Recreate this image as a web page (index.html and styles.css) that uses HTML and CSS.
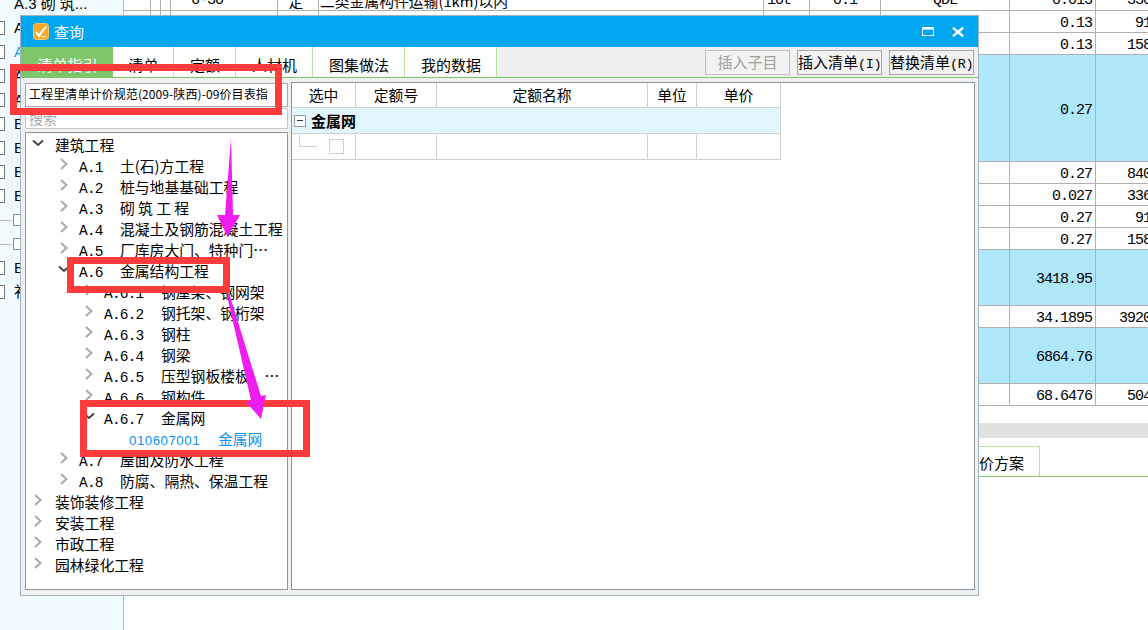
FILE: index.html
```html
<!DOCTYPE html>
<html lang="zh">
<head>
<meta charset="utf-8">
<title>查询</title>
<link rel="stylesheet" href="styles.css">
</head>
<body>
<div class="app">
  <aside class="side">
    <div class="side-row"><span class="side-text">A.3 砌 筑...</span></div>
    <div class="side-row"><i class="doc"></i><span class="side-text">A</span></div>
    <div class="side-row"><i class="doc"></i><span class="side-text blue">A</span></div>
    <div class="side-row"><i class="doc"></i><span class="side-text">A</span></div>
    <div class="side-row"><i class="doc"></i><span class="side-text">A</span></div>
    <div class="side-row"><i class="doc"></i><span class="side-text">B</span></div>
    <div class="side-row"><i class="doc"></i><span class="side-text">B</span></div>
    <div class="side-row"><i class="doc"></i><span class="side-text">B</span></div>
    <div class="side-row"><i class="doc"></i><span class="side-text">B</span></div>
    <div class="side-row"><i class="dash"></i><i class="sq"></i></div>
    <div class="side-row"><i class="dash"></i><i class="sq"></i></div>
    <div class="side-row"><i class="doc"></i><span class="side-text">B</span></div>
    <div class="side-row"><i class="doc"></i><span class="side-text">补</span></div>
  </aside>
  <main class="main">
    <table class="sheet">
      <colgroup>
        <col class="c27"><col class="c10"><col class="c10"><col class="c107"><col class="c41"><col class="c445"><col class="c46"><col class="c71"><col class="c129"><col class="c86"><col class="c59">
      </colgroup>
      <tr class="r22 first"><td></td><td></td><td></td><td class="ind">6-30</td><td class="ctr cjk">定</td><td class="cjk tight">二类金属构件运输(1km)以内</td><td>10t</td><td class="ctr">0.1</td><td class="ctr">QDL</td><td class="rt">0.013</td><td class="rt">330</td></tr>
      <tr class="r22"><td></td><td></td><td></td><td></td><td></td><td></td><td></td><td></td><td></td><td class="rt">0.13</td><td class="rt">91</td></tr>
      <tr class="r22"><td></td><td></td><td></td><td></td><td></td><td></td><td></td><td></td><td></td><td class="rt">0.13</td><td class="rt">158</td></tr>
      <tr class="r107 hi"><td></td><td></td><td></td><td></td><td></td><td></td><td></td><td></td><td></td><td class="rt">0.27</td><td></td></tr>
      <tr class="r22"><td></td><td></td><td></td><td></td><td></td><td></td><td></td><td></td><td></td><td class="rt">0.27</td><td class="rt">840</td></tr>
      <tr class="r22"><td></td><td></td><td></td><td></td><td></td><td></td><td></td><td></td><td></td><td class="rt">0.027</td><td class="rt">336</td></tr>
      <tr class="r22"><td></td><td></td><td></td><td></td><td></td><td></td><td></td><td></td><td></td><td class="rt">0.27</td><td class="rt">91</td></tr>
      <tr class="r22"><td></td><td></td><td></td><td></td><td></td><td></td><td></td><td></td><td></td><td class="rt">0.27</td><td class="rt">158</td></tr>
      <tr class="r56 hi"><td></td><td></td><td></td><td></td><td></td><td></td><td></td><td></td><td></td><td class="rt">3418.95</td><td></td></tr>
      <tr class="r22"><td></td><td></td><td></td><td></td><td></td><td></td><td></td><td></td><td></td><td class="rt">34.1895</td><td class="rt">3920</td></tr>
      <tr class="r56 hi"><td></td><td></td><td></td><td></td><td></td><td></td><td></td><td></td><td></td><td class="rt">6864.76</td><td></td></tr>
      <tr class="r22"><td></td><td></td><td></td><td></td><td></td><td></td><td></td><td></td><td></td><td class="rt">68.6476</td><td class="rt">504</td></tr>
    </table>
    <div class="band"></div>
    <div class="lower-tabs"><span class="lower-tab">价方案</span></div>
  </main>
</div>

<section class="win">
  <header class="win-title">
    <svg class="logo" width="16" height="17" viewBox="0 0 16 17">
      <rect x="0.5" y="0.5" width="15" height="16" rx="3" fill="#f7a62a" stroke="#fbc766"/>
      <path d="M3 9 C4 10 5 11.500 6 13 C8 9.500 10.500 6 13.500 3.500" fill="none" stroke="#fff" stroke-width="2"/>
      <path d="M8 13.500 H13" stroke="#fff" stroke-width="1.200"/>
    </svg>
    <span class="win-name">查询</span>
    <span class="win-controls">
      <svg width="12" height="9" viewBox="0 0 12 9"><rect x="0.500" y="0" width="11" height="8.500" fill="none" stroke="#fff"/><rect x="0.500" y="0" width="11" height="2.500" fill="#fff"/></svg>
      <svg width="12" height="10" viewBox="0 0 12 10"><path d="M1 0.800 L11 9.200 M11 0.800 L1 9.200" stroke="#fff" stroke-width="2.400"/></svg>
    </span>
  </header>
  <nav class="tabbar">
    <span class="tab active">清单指引</span>
    <span class="tab t61">清单</span>
    <span class="tab t62">定额</span>
    <span class="tab t77">人材机</span>
    <span class="tab t92">图集做法</span>
    <span class="tab t92">我的数据</span>
    <span class="btns">
      <span class="btn off">插入子目</span>
      <span class="btn">插入清单<b class="mono">(I)</b></span>
      <span class="btn">替换清单<b class="mono">(R)</b></span>
    </span>
  </nav>
  <div class="win-body">
    <div class="left">
      <div class="combo">工程里清单计价规范(2009-陕西)-09价目表指</div>
      <div class="search">搜索</div>
      <div class="tree">
        <div class="node l1"><svg class="ic" viewBox="0 0 12 12"><path class="dark" d="M1 3.500 L6 8 L11 3.500"/></svg><span class="nm">建筑工程</span></div>
        <div class="node l2"><svg class="ic" viewBox="0 0 12 12"><path d="M3 1 L8.500 6 L3 11"/></svg><span class="code">A.1</span><span class="nm">土(石)方工程</span></div>
        <div class="node l2"><svg class="ic" viewBox="0 0 12 12"><path d="M3 1 L8.500 6 L3 11"/></svg><span class="code">A.2</span><span class="nm">桩与地基基础工程</span></div>
        <div class="node l2"><svg class="ic" viewBox="0 0 12 12"><path d="M3 1 L8.500 6 L3 11"/></svg><span class="code">A.3</span><span class="nm">砌 筑 工 程</span></div>
        <div class="node l2"><svg class="ic" viewBox="0 0 12 12"><path d="M3 1 L8.500 6 L3 11"/></svg><span class="code">A.4</span><span class="nm">混凝土及钢筋混凝土工程</span></div>
        <div class="node l2"><svg class="ic" viewBox="0 0 12 12"><path d="M3 1 L8.500 6 L3 11"/></svg><span class="code">A.5</span><span class="nm">厂库房大门、特种门…</span></div>
        <div class="node l2"><svg class="ic" viewBox="0 0 12 12"><path class="dark" d="M1 3.500 L6 8 L11 3.500"/></svg><span class="code">A.6</span><span class="nm">金属结构工程</span></div>
        <div class="node l3"><svg class="ic" viewBox="0 0 12 12"><path d="M3 1 L8.500 6 L3 11"/></svg><span class="code">A.6.1</span><span class="nm">钢屋架、钢网架</span></div>
        <div class="node l3"><svg class="ic" viewBox="0 0 12 12"><path d="M3 1 L8.500 6 L3 11"/></svg><span class="code">A.6.2</span><span class="nm">钢托架、钢桁架</span></div>
        <div class="node l3"><svg class="ic" viewBox="0 0 12 12"><path d="M3 1 L8.500 6 L3 11"/></svg><span class="code">A.6.3</span><span class="nm">钢柱</span></div>
        <div class="node l3"><svg class="ic" viewBox="0 0 12 12"><path d="M3 1 L8.500 6 L3 11"/></svg><span class="code">A.6.4</span><span class="nm">钢梁</span></div>
        <div class="node l3"><svg class="ic" viewBox="0 0 12 12"><path d="M3 1 L8.500 6 L3 11"/></svg><span class="code">A.6.5</span><span class="nm">压型钢板楼板、…</span></div>
        <div class="node l3"><svg class="ic" viewBox="0 0 12 12"><path d="M3 1 L8.500 6 L3 11"/></svg><span class="code">A.6.6</span><span class="nm">钢构件</span></div>
        <div class="node l3"><svg class="ic" viewBox="0 0 12 12"><path class="dark" d="M1 3.500 L6 8 L11 3.500"/></svg><span class="code">A.6.7</span><span class="nm">金属网</span></div>
        <div class="node leaf"><span class="code">010607001</span><span class="nm">金属网</span></div>
        <div class="node l2"><svg class="ic" viewBox="0 0 12 12"><path d="M3 1 L8.500 6 L3 11"/></svg><span class="code">A.7</span><span class="nm">屋面及防水工程</span></div>
        <div class="node l2"><svg class="ic" viewBox="0 0 12 12"><path d="M3 1 L8.500 6 L3 11"/></svg><span class="code">A.8</span><span class="nm">防腐、隔热、保温工程</span></div>
        <div class="node l1"><svg class="ic" viewBox="0 0 12 12"><path d="M3 1 L8.500 6 L3 11"/></svg><span class="nm">装饰装修工程</span></div>
        <div class="node l1"><svg class="ic" viewBox="0 0 12 12"><path d="M3 1 L8.500 6 L3 11"/></svg><span class="nm">安装工程</span></div>
        <div class="node l1"><svg class="ic" viewBox="0 0 12 12"><path d="M3 1 L8.500 6 L3 11"/></svg><span class="nm">市政工程</span></div>
        <div class="node l1"><svg class="ic" viewBox="0 0 12 12"><path d="M3 1 L8.500 6 L3 11"/></svg><span class="nm">园林绿化工程</span></div>
      </div>
    </div>
    <div class="right">
      <div class="grid">
        <div class="hd">选中</div><div class="hd">定额号</div><div class="hd">定额名称</div><div class="hd">单位</div><div class="hd">单价</div>
        <div class="group"><span class="minus"></span><span class="group-name">金属网</span></div>
        <div class="cell chk">
          <svg width="63" height="25" viewBox="0 0 63 25"><path d="M7.500 0 V12.500 H25" fill="none" stroke="#d0d0d0"/><rect x="37.500" y="5.500" width="14" height="14" fill="#fff" stroke="#d0d0d0"/></svg>
        </div>
        <div class="cell"></div><div class="cell"></div><div class="cell"></div><div class="cell"></div>
      </div>
    </div>
  </div>
</section>

<div class="mark m1"></div>
<div class="mark m2"></div>
<div class="mark m3"></div>
<svg class="arrows" width="1148" height="630" viewBox="0 0 1148 630">
  <path d="M231 138 L233 215 L240 215 L227.500 237 L217 215 L225 215 Z" fill="#f01df0"/>
  <path d="M227 296 L229 293 L261 396 L266 395 L261 419 L246 402 L251 400 Z" fill="#f01df0"/>
</svg>
</body>
</html>
```
FILE: styles.css
```css
* { box-sizing: border-box; }
html, body { margin: 0; padding: 0; }
body {
  position: relative;
  width: 1148px;
  height: 630px;
  overflow: hidden;
  background: #fff;
  color: #000;
  font-family: "Noto Sans CJK SC", "Liberation Sans", sans-serif;
}
.app { display: flex; width: 1148px; height: 630px; }

/* background sidebar */
.side {
  width: 124px;
  flex: none;
  background: #f0fbff;
  border-right: 1px solid #b4b4b4;
  margin-top: -8px;
}
.side-row {
  display: flex;
  align-items: center;
  height: 24px;
  white-space: nowrap;
  padding-left: 14px;
  position: relative;
}
.side-text { font: 15px/24px "Liberation Sans", "Noto Sans CJK SC", sans-serif; }
.side-text.blue { color: #1a9bf0; }
.doc {
  position: absolute;
  left: -6px;
  top: 5px;
  width: 11px;
  height: 14px;
  border: 1px solid #777;
  background: #fff;
}
.dash { position: absolute; left: 0; top: 12px; width: 12px; height: 1px; background: #bbb; }
.sq {
  position: absolute;
  left: 13px;
  top: 6px;
  width: 12px;
  height: 12px;
  border: 1px solid #888;
  background: #fff;
}

/* background sheet */
.main { flex: 1; min-width: 0; display: flex; flex-direction: column; }
.sheet {
  table-layout: fixed;
  width: 1031px;
  margin-top: -11px;
  border-collapse: separate;
  border-spacing: 0;
  font: 15px/14px "Liberation Mono", "Noto Sans CJK SC", monospace;
  letter-spacing: -1px;
}
.c10 { width: 10px; }
.c27 { width: 27px; }
.c41 { width: 41px; }
.c46 { width: 46px; }
.c59 { width: 59px; }
.c71 { width: 71px; }
.c86 { width: 86px; }
.c107 { width: 107px; }
.c129 { width: 129px; }
.c445 { width: 445px; }
.sheet td {
  padding: 5px 3px 0;
  border-right: 1px solid #b0b0b0;
  border-bottom: 1px solid #b0b0b0;
  white-space: nowrap;
  overflow: hidden;
}
.r22 { height: 22px; }
.r56 { height: 56px; }
.r107 { height: 107px; }
.sheet .first td { padding-top: 2px; }
.hi td { background: #afe8fb; }
.rt { text-align: right; }
.ctr { text-align: center; }
.sheet .ind { padding-left: 20px; }
.sheet .cjk { font: 14.8px/14px "Noto Sans CJK SC", sans-serif; letter-spacing: 0; }
.sheet .ctr.cjk { padding-right: 7px; }
.sheet .tight { padding-left: 1px; }
.band { height: 15px; margin-top: 17px; background: #e0e0e0; }
.lower-tabs {
  display: flex;
  justify-content: flex-end;
  height: 31px;
  margin-top: 8px;
  padding-right: 108px;
  border-bottom: 1px solid #7fc56a;
}
.lower-tab {
  width: 200px;
  padding-right: 15px;
  text-align: right;
  font-size: 15px;
  line-height: 32px;
  border-top: 1px solid #b6e39a;
  border-right: 1px solid #b6e39a;
}

/* query window */
.win {
  position: absolute;
  left: 20px;
  top: 15px;
  width: 959px;
  height: 581px;
  display: flex;
  flex-direction: column;
  background: #f0f0f0;
  border: 1px solid #9fb4c0;
}
.win-title {
  display: flex;
  align-items: center;
  height: 31px;
  flex: none;
  padding-left: 12px;
  background: #00a7f0;
}
.win-name { margin-left: 5px; color: #fff; font-size: 15px; line-height: 20px; }
.logo { display: block; }
.win-controls { display: flex; align-items: center; gap: 18px; margin-left: auto; padding-right: 14px; }
.win-controls svg { display: block; }

.tabbar {
  display: flex;
  flex: none;
  height: 31px;
  border-bottom: 1px solid #7fc56a;
}
.tab {
  background: #fff;
  border-right: 1px solid #b6e39a;
  padding-left: 1px;
  text-align: center;
  font-size: 15px;
  line-height: 35px;
  flex: none;
}
.tab.active { width: 92px; background: #7fc56a; color: #fff; border-right: 0; }
.t61 { width: 61px; }
.t62 { width: 62px; }
.t77 { width: 77px; }
.t92 { width: 92px; }
.btns { display: flex; gap: 7px; margin-left: auto; padding: 3px 4px 0 0; }
.btn {
  width: 85px;
  height: 25px;
  background: #f2f2f2;
  border: 1px solid #a8a8a8;
  text-align: center;
  font-size: 15px;
  line-height: 22px;
  white-space: nowrap;
  overflow: hidden;
}
.btn.off { color: #a0a0a0; border-color: #c0c0c0; }
.mono { font: 400 13.5px/22px "Liberation Mono", monospace; letter-spacing: -0.4px; }

.win-body {
  flex: 1;
  min-height: 0;
  display: flex;
  gap: 3px;
  padding: 4px 3px 5px 4px;
}
.left { width: 263px; flex: none; display: flex; flex-direction: column; }
.combo {
  height: 24px;
  margin-top: 1px;
  padding-left: 3px;
  background: #fff;
  border: 1px solid #a8a8a8;
  font-size: 12px;
  letter-spacing: 0.1px;
  line-height: 20px;
  white-space: nowrap;
  overflow: hidden;
}
.search {
  height: 21px;
  margin-top: 1px;
  padding-left: 3px;
  background: #fff;
  border: 1px solid #c8c8c8;
  color: #a8a8a8;
  font-size: 14px;
  line-height: 19px;
}
.tree {
  flex: 1;
  min-height: 0;
  margin-top: 3px;
  padding-top: 1px;
  background: #fff;
  border: 1px solid #8a96a0;
  overflow: hidden;
}
.node {
  display: flex;
  align-items: baseline;
  height: 21px;
  white-space: nowrap;
}
.ic { width: 12px; height: 12px; flex: none; margin-right: 9px; align-self: center; margin-top: -3px; }
.ic path { fill: none; stroke: #aaa; stroke-width: 2; }
.ic path.dark { stroke: #444; }
.l1 { padding-left: 6px; }
.l1 .ic { margin-right: 11px; }
.l2 { padding-left: 32px; }
.l3 { padding-left: 57px; }
.leaf { padding-left: 103px; color: #0a93f5; }
.nm { font-size: 14.8px; line-height: 21px; }
.code { flex: none; font: 14.5px/21px "Liberation Mono", monospace; letter-spacing: -0.8px; }
.l2 .code { width: 41px; }
.l3 .code { width: 57px; }
.leaf .code { width: 89px; font-family: "Liberation Sans", sans-serif; font-size: 13.3px; letter-spacing: 0.5px; }

.right {
  flex: 1;
  min-width: 0;
  background: #fff;
  border: 1px solid #8a96a0;
}
.grid {
  display: grid;
  grid-template-columns: 64px 81px 211px 49px 84px;
  grid-template-rows: 25px 26px 26px;
  width: 489px;
}
.hd, .cell { border-right: 1px solid #d0d0d0; border-bottom: 1px solid #d0d0d0; }
.hd { text-align: center; font-size: 14.8px; line-height: 23px; }
.group {
  grid-column: 1 / -1;
  display: flex;
  align-items: center;
  background: #e2f6fe;
  border-right: 1px solid #d0d0d0;
  border-bottom: 1px solid #d0d0d0;
  padding-left: 2px;
}
.minus {
  position: relative;
  width: 12px;
  height: 12px;
  background: #fff;
  border: 1px solid #999;
}
.minus::after { content: ""; position: absolute; left: 2px; top: 4px; width: 6px; height: 1px; background: #333; }
.group-name { margin-left: 5px; font-size: 15px; font-weight: 700; line-height: 22px; }
.chk svg { display: block; }

/* annotations on top of the screenshot */
.mark { position: absolute; border: 7px solid #ff3b3b; }
.m1 { left: 10px; top: 64px; width: 272px; height: 51px; }
.m2 { left: 67px; top: 257px; width: 163px; height: 36px; }
.m3 { left: 80px; top: 400px; width: 230px; height: 57px; }
.arrows { position: absolute; left: 0; top: 0; pointer-events: none; }
```
